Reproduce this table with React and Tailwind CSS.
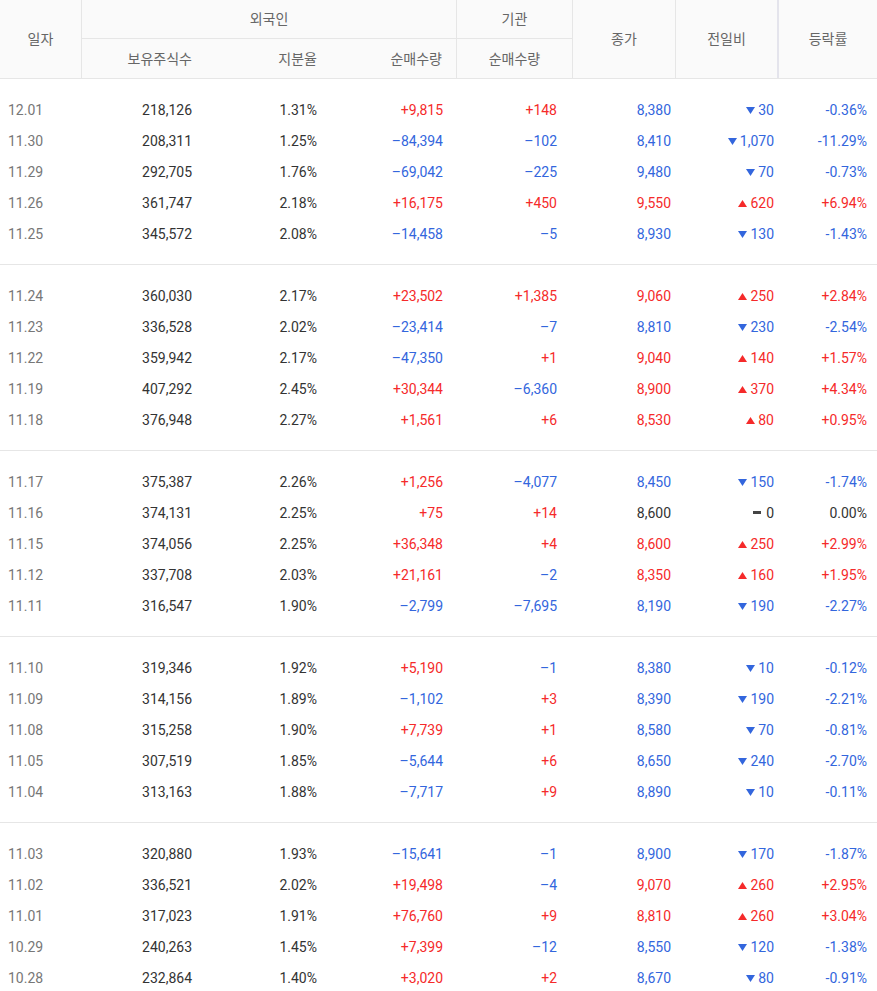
import React from 'react';

const RED = 'text-[#f52a2a]';
const BLUE = 'text-[#3366dd]';
const DARK = 'text-[#333]';

const groups = [
  [
    ['12.01', '218,126', '1.31%', '+9,815', '+148', '8,380', 'd', '30', '-0.36%'],
    ['11.30', '208,311', '1.25%', '–84,394', '–102', '8,410', 'd', '1,070', '-11.29%'],
    ['11.29', '292,705', '1.76%', '–69,042', '–225', '9,480', 'd', '70', '-0.73%'],
    ['11.26', '361,747', '2.18%', '+16,175', '+450', '9,550', 'u', '620', '+6.94%'],
    ['11.25', '345,572', '2.08%', '–14,458', '–5', '8,930', 'd', '130', '-1.43%'],
  ],
  [
    ['11.24', '360,030', '2.17%', '+23,502', '+1,385', '9,060', 'u', '250', '+2.84%'],
    ['11.23', '336,528', '2.02%', '–23,414', '–7', '8,810', 'd', '230', '-2.54%'],
    ['11.22', '359,942', '2.17%', '–47,350', '+1', '9,040', 'u', '140', '+1.57%'],
    ['11.19', '407,292', '2.45%', '+30,344', '–6,360', '8,900', 'u', '370', '+4.34%'],
    ['11.18', '376,948', '2.27%', '+1,561', '+6', '8,530', 'u', '80', '+0.95%'],
  ],
  [
    ['11.17', '375,387', '2.26%', '+1,256', '–4,077', '8,450', 'd', '150', '-1.74%'],
    ['11.16', '374,131', '2.25%', '+75', '+14', '8,600', 'f', '0', '0.00%'],
    ['11.15', '374,056', '2.25%', '+36,348', '+4', '8,600', 'u', '250', '+2.99%'],
    ['11.12', '337,708', '2.03%', '+21,161', '–2', '8,350', 'u', '160', '+1.95%'],
    ['11.11', '316,547', '1.90%', '–2,799', '–7,695', '8,190', 'd', '190', '-2.27%'],
  ],
  [
    ['11.10', '319,346', '1.92%', '+5,190', '–1', '8,380', 'd', '10', '-0.12%'],
    ['11.09', '314,156', '1.89%', '–1,102', '+3', '8,390', 'd', '190', '-2.21%'],
    ['11.08', '315,258', '1.90%', '+7,739', '+1', '8,580', 'd', '70', '-0.81%'],
    ['11.05', '307,519', '1.85%', '–5,644', '+6', '8,650', 'd', '240', '-2.70%'],
    ['11.04', '313,163', '1.88%', '–7,717', '+9', '8,890', 'd', '10', '-0.11%'],
  ],
  [
    ['11.03', '320,880', '1.93%', '–15,641', '–1', '8,900', 'd', '170', '-1.87%'],
    ['11.02', '336,521', '2.02%', '+19,498', '–4', '9,070', 'u', '260', '+2.95%'],
    ['11.01', '317,023', '1.91%', '+76,760', '+9', '8,810', 'u', '260', '+3.04%'],
    ['10.29', '240,263', '1.45%', '+7,399', '–12', '8,550', 'd', '120', '-1.38%'],
    ['10.28', '232,864', '1.40%', '+3,020', '+2', '8,670', 'd', '80', '-0.91%'],
  ],
];

const signColor = (v) => (v.startsWith('+') ? RED : v.startsWith('–') || v.startsWith('-') ? BLUE : DARK);
const dirColor = (d) => (d === 'u' ? RED : d === 'd' ? BLUE : DARK);

const cols = 'grid grid-cols-[82px_125px_125px_125px_116px_103px_103px_98px]';

function Arrow({ dir }) {
  if (dir === 'f') return <span className="inline-block w-[8px] h-[3px] bg-[#444] mr-[5px] mb-[4px]" />;
  return (
    <svg width="9" height="7" viewBox="0 0 9 7" className="inline-block mr-[3px] mb-[2px]">
      {dir === 'u' ? <polygon points="4.5,0 9,7 0,7" fill="#f52a2a" /> : <polygon points="0,0 9,0 4.5,7" fill="#3366dd" />}
    </svg>
  );
}

function Row({ r }) {
  const [date, hold, ratio, frg, inst, close, dir, diff, rate] = r;
  return (
    <div className={`${cols} h-[31px] items-center text-[14px]`}>
      <div className="pl-[8px] text-[#777]">{date}</div>
      <div className={`text-right pr-[15px] ${DARK}`}>{hold}</div>
      <div className={`text-right pr-[15px] ${DARK}`}>{ratio}</div>
      <div className={`text-right pr-[14px] ${signColor(frg)}`}>{frg}</div>
      <div className={`text-right pr-[16px] ${signColor(inst)}`}>{inst}</div>
      <div className={`text-right pr-[5px] ${dirColor(dir)}`}>{close}</div>
      <div className={`text-right pr-[5px] ${dirColor(dir)}`}>
        <Arrow dir={dir} />
        {diff}
      </div>
      <div className={`text-right pr-[10px] ${signColor(rate)}`}>{rate}</div>
    </div>
  );
}

export default function App() {
  return (
    <div className="w-[877px] h-[991px] overflow-hidden bg-white font-['Roboto','Noto_Sans_CJK_KR',sans-serif]">
      {/* header */}
      <div className={`${cols} grid-rows-[39px_39px] bg-[#fafafa] border-b border-[#e6e6e6] text-[14px] text-[#666]`}>
        <div className="row-span-2 flex items-center justify-center border-r border-[#e6e6e6]">일자</div>
        <div className="col-span-3 flex items-center justify-center border-r border-b border-[#e6e6e6]">외국인</div>
        <div className="flex items-center justify-center border-r border-b border-[#e6e6e6]">기관</div>
        <div className="row-span-2 flex items-center justify-center border-r border-[#e6e6e6]">종가</div>
        <div className="row-span-2 flex items-center justify-center border-r-2 border-[#e4e4ec]">전일비</div>
        <div className="row-span-2 flex items-center justify-center">등락률</div>
        <div className="flex items-center justify-end pr-[15px] pt-[2px]">보유주식수</div>
        <div className="flex items-center justify-end pr-[15px] pt-[2px]">지분율</div>
        <div className="flex items-center justify-end pr-[14px] pt-[2px] border-r border-[#e6e6e6]">순매수량</div>
        <div className="flex items-center justify-center pt-[2px] border-r border-[#e6e6e6]">순매수량</div>
      </div>
      {groups.map((g, i) => (
        <div key={i} className="pt-[16px] pb-[14px] border-b border-[#e6e6e6]">
          {g.map((r) => (
            <Row key={r[0]} r={r} />
          ))}
        </div>
      ))}
    </div>
  );
}
